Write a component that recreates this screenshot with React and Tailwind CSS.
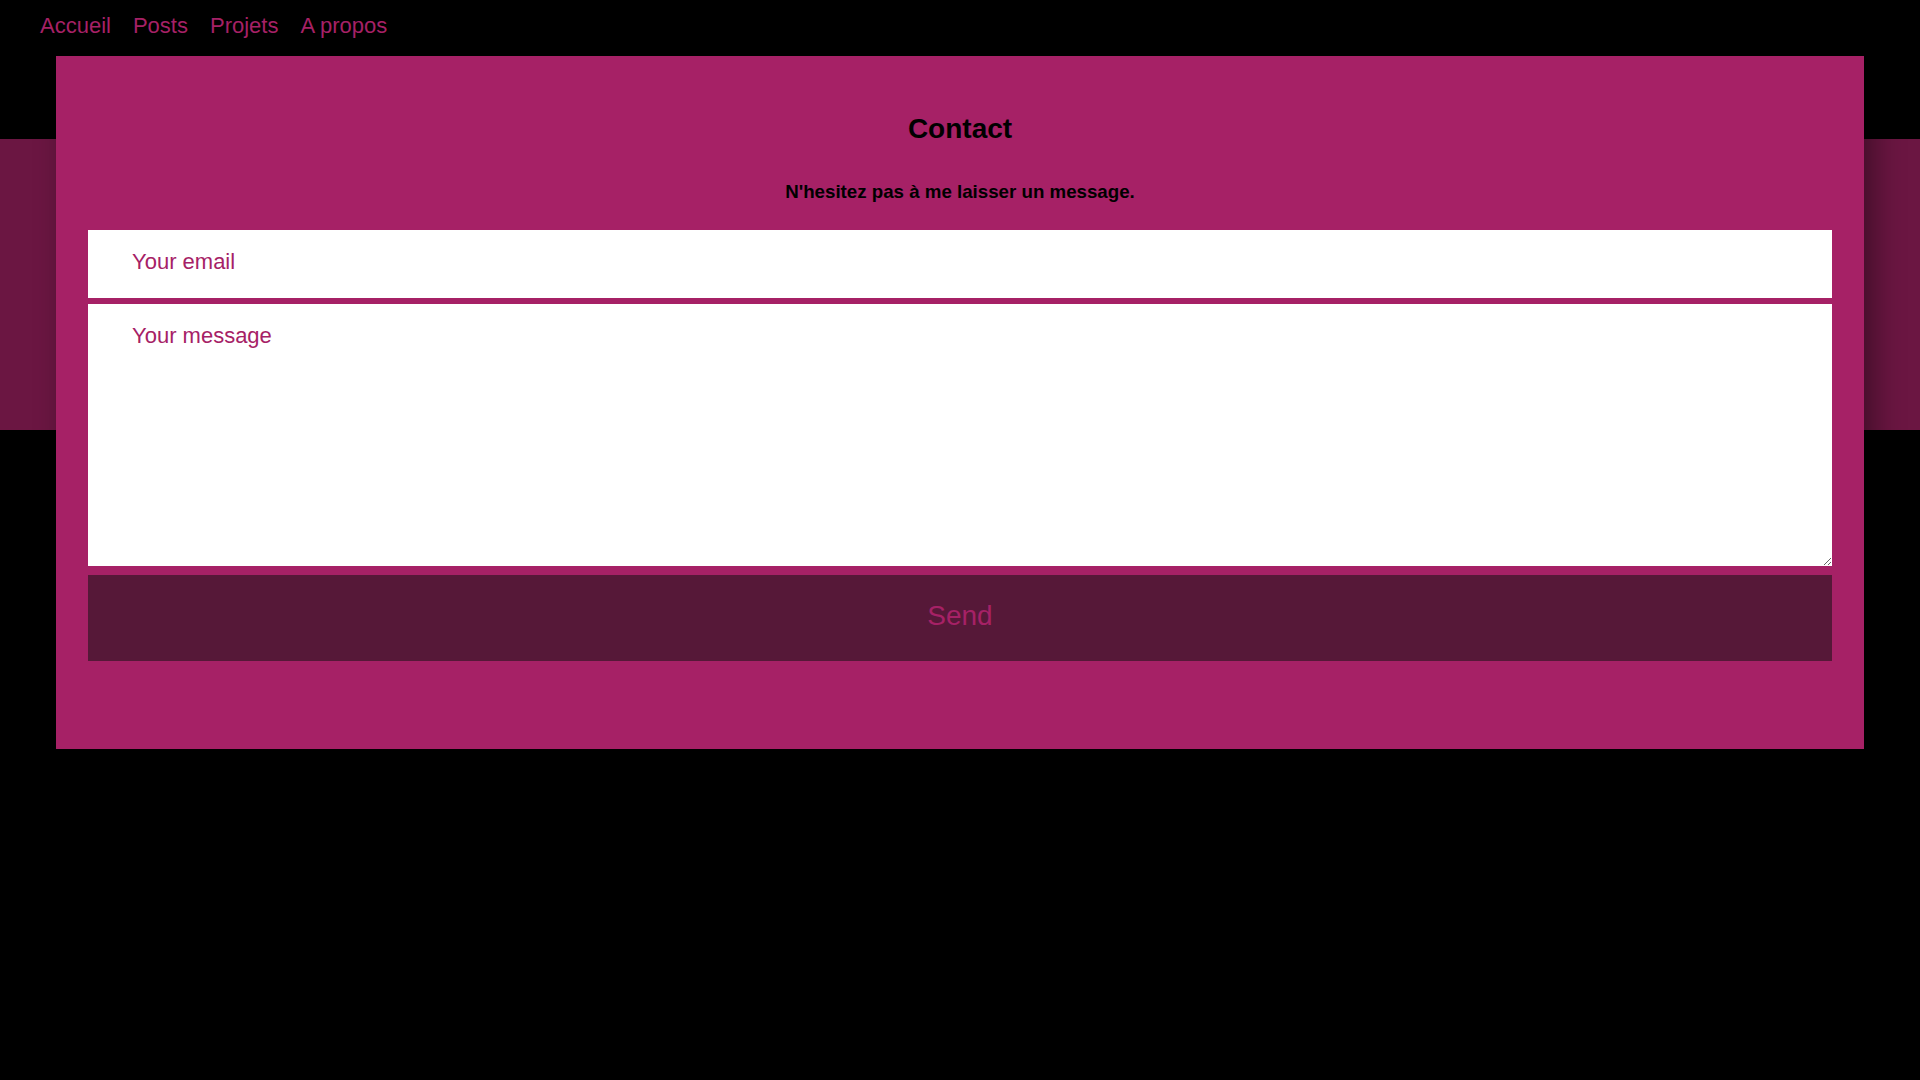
import React, { useState } from "react";

const NAV_LINKS = ["Accueil", "Posts", "Projets", "A propos"];

const ContactPanel = () => {
  const [email, setEmail] = useState("");
  const [message, setMessage] = useState("");

  const handleSubmit = (e) => {
    e.preventDefault();
  };

  return (
    <section className="mx-[56px] bg-[#a62166] px-8 pt-[57px] pb-[88px] text-center shadow-[10px_0_28px_rgba(0,0,0,0.4)]">
      <h2 className="text-[28px] leading-[31px] font-bold text-black">Contact</h2>
      <p className="mt-[37px] text-[18.72px] leading-[21px] font-bold text-black">
        N'hesitez pas à me laisser un message.
      </p>

      <form onSubmit={handleSubmit} className="mt-[28px] flex flex-col">
        <input
          type="email"
          value={email}
          onChange={(e) => setEmail(e.target.value)}
          placeholder="Your email"
          className="block h-[68px] w-full bg-white pt-[19px] pb-[24px] pl-[44px] pr-4 text-[22px] leading-[25px] text-[#a62166] outline-none placeholder:text-[#a62166]"
        />
        <textarea
          value={message}
          onChange={(e) => setMessage(e.target.value)}
          placeholder="Your message"
          className="mt-[6px] block h-[262px] w-full bg-white pt-[19px] pl-[44px] pr-4 text-[22px] leading-[25px] text-[#a62166] outline-none placeholder:text-[#a62166]"
        />
        <button
          type="submit"
          className="mt-[9px] block h-[86px] w-full bg-[#561838] pb-[5px] text-[28px] text-[#a62166]"
        >
          Send
        </button>
      </form>
    </section>
  );
};

export default function App() {
  return (
    <div
      className="min-h-[1080px] bg-black bg-[linear-gradient(to_bottom,#000_139px,#6b1642_139px,#6b1642_430px,#000_430px)] font-['Liberation_Sans',Arial,sans-serif]"
    >
      <nav className="flex h-[56px] items-start gap-[22px] pl-[40px] pt-[13px]">
        {NAV_LINKS.map((link) => (
          <a key={link} href="#" className="text-[22px] leading-[25px] text-[#a62166]">
            {link}
          </a>
        ))}
      </nav>
      <ContactPanel />
    </div>
  );
}
